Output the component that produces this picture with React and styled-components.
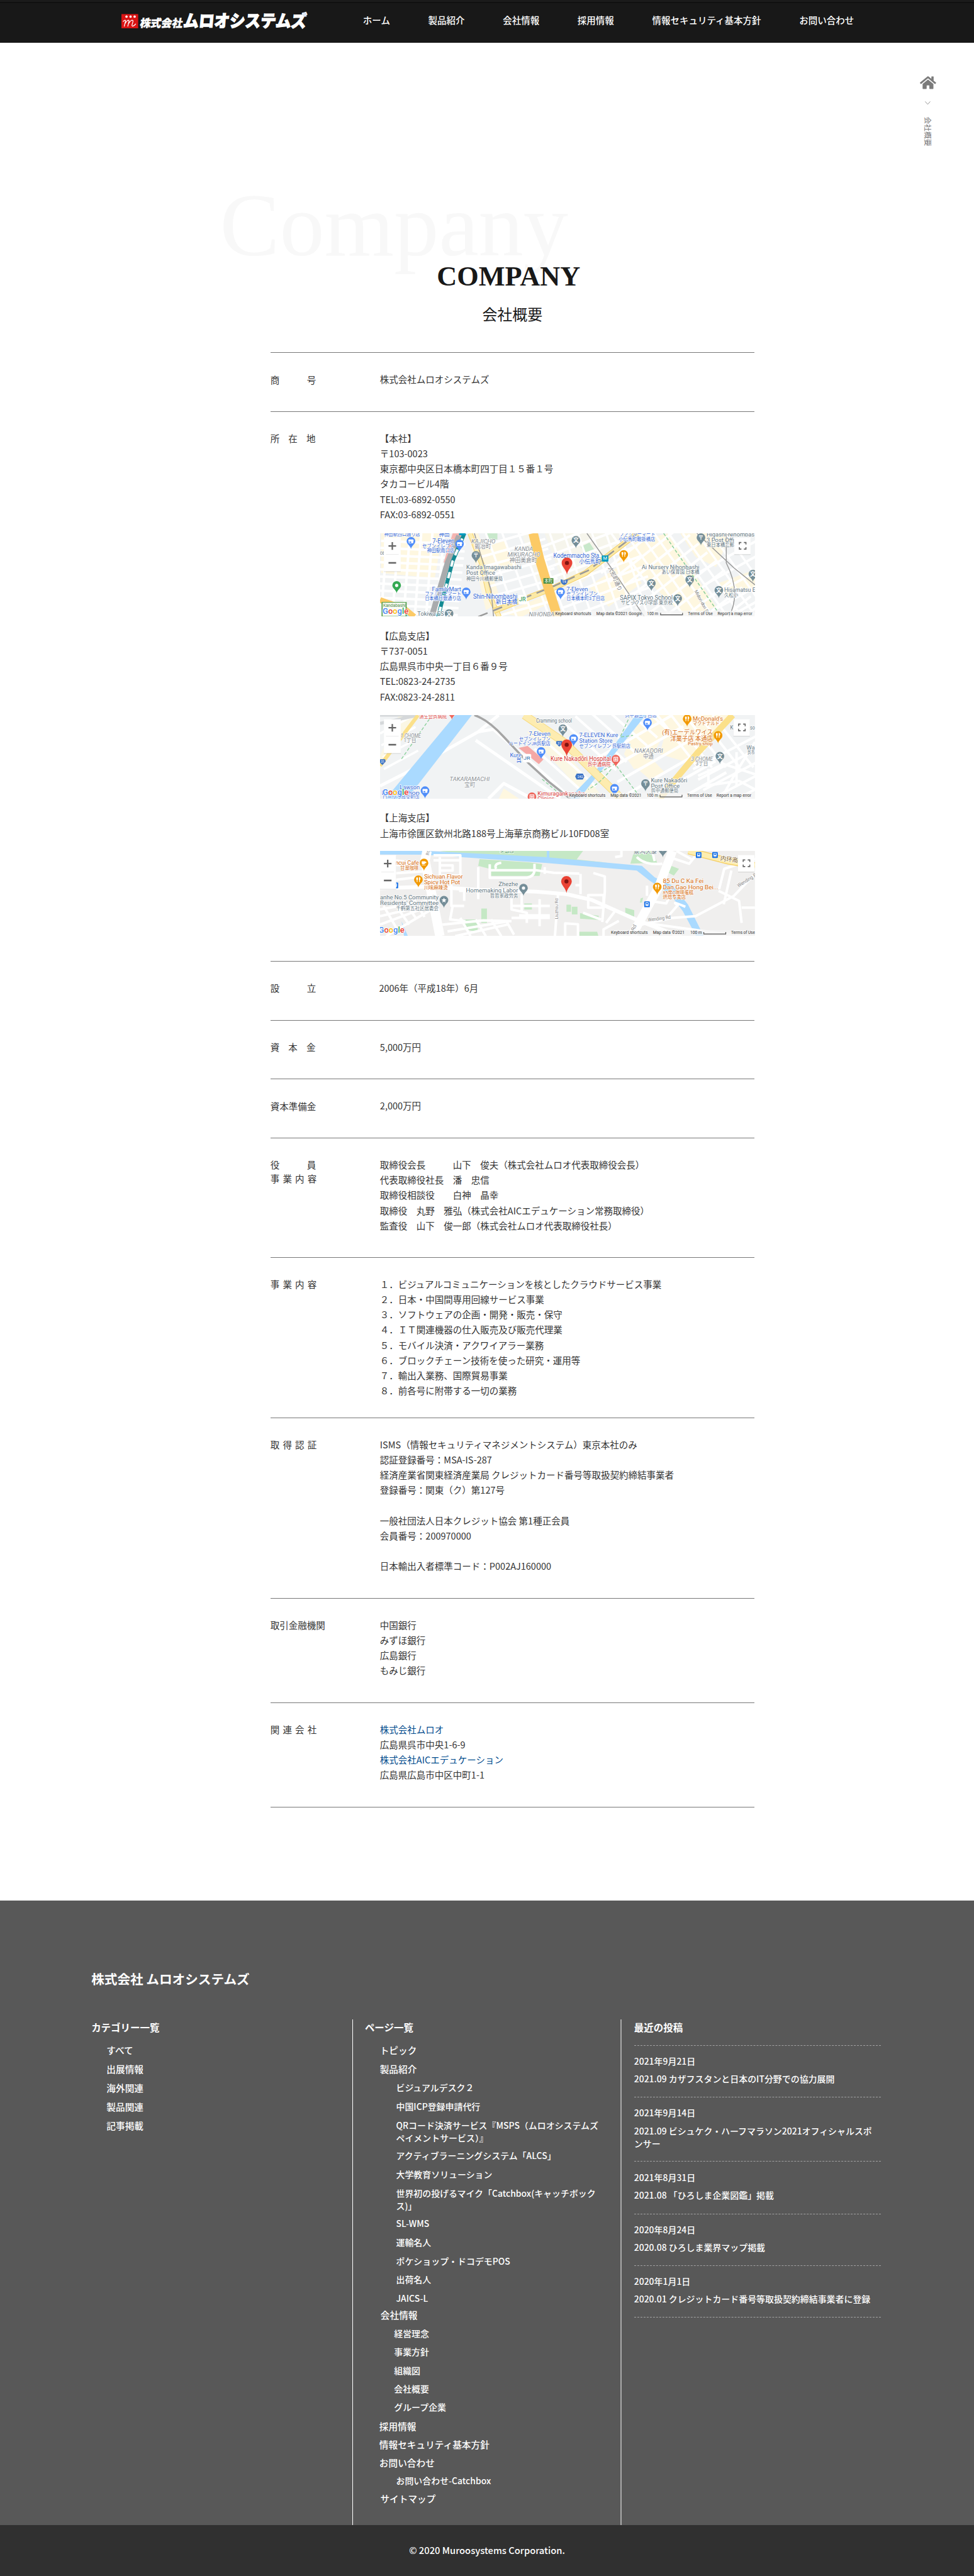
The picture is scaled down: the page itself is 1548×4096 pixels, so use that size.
import React from "react";
import styled, { createGlobalStyle, css } from "styled-components";
import { FaHome } from "react-icons/fa";

/* 1rem = 10 design pixels, the whole page is scaled through the root size */
const GlobalStyle = createGlobalStyle`
  html { font-size: 8.0625px; }
  body {
    margin: 0;
    background: #fff;
    color: #333;
    font-family: "Noto Sans CJK JP", "Noto Sans", sans-serif;
    font-size: 1.8rem;
    overflow-x: hidden;
  }
  *, *::before, *::after { box-sizing: border-box; }
  a { color: inherit; text-decoration: none; }
  ul { list-style: none; margin: 0; padding: 0; }
`;

const Page = styled.div`
  position: relative;
  width: 192rem;
  height: 508rem;
  overflow: hidden;
  display: flex;
  flex-direction: column;
`;

/* ---------- header ---------- */
const Header = styled.header`
  height: 8.4rem;
  flex: none;
  display: flex;
  align-items: flex-start;
  background: linear-gradient(#1b1b1b 0 0.4rem, #101010 0.4rem 0.6rem, #181818 0.6rem);
`;
const Logo = styled.svg`
  width: 36.6rem;
  height: 3.2rem;
  margin: 2.5rem 0 0 23.9rem;
  flex: none;
  overflow: visible;
`;
const Nav = styled.nav`
  display: flex;
  gap: 7.52rem;
  margin: 2.5rem 0 0 11.05rem;
  color: #fff;
  font-weight: 500;
  line-height: 3rem;
  white-space: nowrap;
`;

/* ---------- breadcrumb ---------- */
const Breadcrumb = styled.aside`
  position: absolute;
  top: 15rem;
  right: 7.5rem;
  width: 3.2rem;
  display: flex;
  flex-direction: column;
  align-items: center;
  color: #7b7b7b;
`;
const HomeIcon = styled(FaHome)`
  width: 3.2rem;
  height: 2.84rem;
  margin-top: -0.1rem;
`;
const Chevron = styled.svg`
  width: 1.1rem;
  height: 0.7rem;
  margin: 2.2rem 0 2.4rem;
`;
const CrumbSlot = styled.div`
  width: 1.5rem;
  height: 5.9rem;
  display: flex;
  align-items: center;
  justify-content: center;
`;
const CrumbText = styled.span`
  flex: none;
  transform: rotate(90deg);
  font-size: 1.46rem;
  line-height: 1.5rem;
  white-space: nowrap;
`;

/* ---------- company section ---------- */
const Main = styled.main`
  position: relative;
  width: 95.4rem;
  margin-left: 53.3rem;
  flex: 1 0 auto;
`;
const Watermark = styled.div`
  position: absolute;
  left: -9.95rem;
  top: 26.1rem;
  font: 17.65rem/20rem "Liberation Serif", serif;
  color: #f8f8f8;
  z-index: -1;
`;
const Title = styled.h1`
  margin: 42.6rem 0 0;
  padding-right: 1.5rem;
  text-align: center;
  font: bold 5.5rem/7rem "Liberation Serif", serif;
  color: #181818;
`;
const Subtitle = styled.h2`
  margin: 1.95rem 0 5.55rem;
  text-align: center;
  font-size: 2.97rem;
  font-weight: 400;
  line-height: 4rem;
  color: #181818;
`;
const Row = styled.section`
  height: ${(p) => p.$h}rem;
  display: grid;
  grid-template-columns: 21.6rem 1fr;
  align-items: start;
  border-top: 1px solid #777;
  &:last-child { border-bottom: 1px solid #777; }
`;
const Term = styled.div`
  padding-top: 3.88rem;
  line-height: 2.66rem;
  white-space: pre-line;
  word-spacing: 0.24rem;
  letter-spacing: ${(p) => p.$tight ? "-0.025rem" : 0};
`;
const Detail = styled.div`
  padding-top: 3.73rem;
  line-height: 3rem;
  white-space: pre-line;
  margin-left: ${(p) => p.$shift || 0}rem;
`;
const Link = styled.a`
  color: #004a8c;
`;
const Map = styled.svg`
  display: block;
  width: ${(p) => p.$w}rem;
  height: ${(p) => p.$h}rem;
  margin: ${(p) => p.$m}rem 0 2.3rem;
  font-family: Roboto, "Noto Sans CJK JP", sans-serif;
`;

/* ---------- footer ---------- */
const Footer = styled.footer`
  flex: none;
  height: 123.2rem;
  padding: 13.4rem 18rem 0;
  background: #585858;
  color: #fff;
  font-weight: 500;
  display: flex;
  flex-direction: column;
`;
const FooterTitle = styled.h3`
  margin: 0;
  font-size: 2.56rem;
  line-height: 4rem;
  font-weight: 700;
`;
const Columns = styled.div`
  flex: 1;
  margin-top: 6.1rem;
  display: grid;
  grid-template-columns: 51.4rem 52.85rem 1fr;
`;
const Column = styled.div`
  padding-left: ${(p) => p.$pad || 0}rem;
  ${(p) => p.$line && css`border-left: ${p.$line};`}
`;
const Heading = styled.h4`
  margin: 0;
  font-size: 1.92rem;
  line-height: 3rem;
  font-weight: 700;
`;
const List = styled.ul`
  padding-top: 1.8rem;
`;
const Item = styled.li`
  font-size: ${(p) => (p.$sub ? 1.73 : 1.82)}rem;
  line-height: 2.47rem;
  margin-top: ${(p) => p.$gap}rem;
  margin-left: ${(p) => p.$in}rem;
  white-space: pre;
`;
const Posts = styled.ul`
  width: 48.6rem;
  margin-top: 2rem;
  border-top: 1px dashed #a2a2a2;
`;
const Post = styled.li`
  height: ${(p) => p.$h}rem;
  padding-top: 1.92rem;
  border-bottom: 1px dashed #a2a2a2;
  font-size: 1.73rem;
  line-height: 2.46rem;
`;
const PostTitle = styled.div`
  margin-top: 1.05rem;
  white-space: pre-line;
`;
const Copyright = styled.div`
  flex: none;
  height: 10rem;
  background: #303030;
  color: #fff;
  font-weight: 500;
  font-size: 1.83rem;
  line-height: 10rem;
  text-align: center;
`;

/* ---------- map pieces: map units are 1.985 x 3 per design pixel ---------- */
const at = (x, y, rot) => `translate(${x} ${y}) scale(1.985 3)` + (rot ? ` rotate(${rot})` : "");

const Label = ({ x, y, len, size = 12, fill = "#5f7580", end, rot, italic, halo = true, children }) => (
  <text
    transform={at(x, y, rot)}
    fontSize={size}
    fill={fill}
    fontStyle={italic ? "italic" : undefined}
    textAnchor={end ? "end" : "start"}
    textLength={len ? len / 1.985 : undefined}
    lengthAdjust="spacingAndGlyphs"
    stroke={halo ? "#fff" : "none"}
    strokeWidth={halo ? 1.6 : 0}
    paintOrder="stroke"
  >
    {children}
  </text>
);

const glyphs = {
  shop: <path d="M-4.5-19h9l1 3.5h-1v4h-9v-4h-1zM-3-15v2.5h3.5v-2.5z" fill="#fff" fillRule="evenodd" />,
  food: <path d="M-3.5-20v3.5c0 1.5 2 1.5 2 0V-20M-2.5-20v9M2-11v-9c2 1 2 4 0 5" stroke="#fff" strokeWidth="1.4" fill="none" />,
  cup: <path d="M-4.5-19h7v1h2v3h-2.500q0 2-2 2h-2.500q-2 0-2-2zM-4.500-12h8v1h-8z" fill="#fff" />,
  dot: <circle cy="-15.500" r="3.200" fill="#fff" />,
  cross: <path d="M-4.500-20h9v9h-9zM-3-18.500v6h6v-6zM-.8-18h1.600v1.700h1.700v1.600h-1.700v1.700h-1.600v-1.700h-1.700v-1.600h1.700z" fill="#fff" fillRule="evenodd" />,
  star: <path d="M0-20.500l1.400 3.300 3.600.3-2.700 2.300.8 3.600-3.100-1.900-3.100 1.900.8-3.600-2.700-2.300 3.600-.3z" fill="#fff" />,
};
const Pin = ({ x, y, fill = "#758e98", icon }) => (
  <g transform={at(x, y)}>
    <path d="M0 0C-1-7-8.500-9-8.500-15.500A8.500 8.500 0 1 1 8.500-15.500C8.500-9 1-7 0 0Z" fill={fill} />
    {glyphs[icon] || <text y="-11.500" fontSize="11" fontWeight="700" fill="#fff" textAnchor="middle">{icon}</text>}
  </g>
);
const Marker = ({ x, y }) => (
  <g transform={at(x, y)}>
    <path d="M0 0C-1.500-10-10.500-15-10.500-23A10.500 10.500 0 1 1 10.500-23C10.500-15 1.500-10 0 0Z" fill="#ea4335" />
    <circle cy="-22.800" r="4" fill="#811411" />
  </g>
);
const Road = ({ d, w = 4, c = "#fff", dash }) => (
  <path d={d} fill="none" stroke={c} strokeWidth={w} strokeDasharray={dash} vectorEffect="non-scaling-stroke" strokeLinejoin="round" />
);
/* n parallel segments, each shifted by (dx, dy) */
const hatch = (x1, y1, x2, y2, dx, dy, n) =>
  Array.from({ length: n }, (_, i) => `M${x1 + dx * i} ${y1 + dy * i}L${x2 + dx * i} ${y2 + dy * i}`).join("");

const Google = ({ x, y }) => (
  <text transform={at(x, y)} fontSize="16.500" fontWeight="500" textLength="51" lengthAdjust="spacingAndGlyphs" stroke="#fff" strokeWidth="2" paintOrder="stroke">
    <tspan fill="#4285f4">G</tspan><tspan fill="#ea4335">o</tspan><tspan fill="#fbbc05">o</tspan>
    <tspan fill="#4285f4">g</tspan><tspan fill="#34a853">l</tspan><tspan fill="#ea4335">e</tspan>
  </text>
);
const Controls = ({ x, y, fx, fy, w = 66 }) => (
  <g>
    <rect x={x} y={y + 4} width={w} height="200" fill="#000" opacity=".12" />
    <rect x={x} y={y} width={w} height="200" fill="#fff" />
    <path d={`M${x + 8} ${y + 100}h50`} stroke="#e6e6e6" strokeWidth="3" />
    <g transform={at(x + w - 33, y + 50)} stroke="#666" strokeWidth="2.800"><path d="M-7.500 0h15M0-7.500v15" /></g>
    <g transform={at(x + w - 33, y + 150)} stroke="#666" strokeWidth="3.200"><path d="M-7.500 0h15" /></g>
    <rect x={fx} y={fy + 4} width="64" height="98" fill="#000" opacity=".12" />
    <rect x={fx} y={fy} width="64" height="98" fill="#fff" />
    <g transform={at(fx + 33, fy + 48)} stroke="#666" strokeWidth="2" fill="none">
      <path d="M-6.500-2.500V-6.500H-2.500M2.500-6.500H6.500V-2.500M6.500 2.500V6.500H2.500M-2.500 6.500H-6.500V2.500" />
    </g>
  </g>
);
const Credits = ({ y, parts, barX, from, to }) => (
  <g>
    <rect x={from} y={y - 20} width={to - from} height="34" fill="#f5f5f5" opacity=".75" />
    {parts.map(([x, len, t]) => (
      <Label key={t} x={x} y={y + 5} len={len} size={8.8} fill="#333" halo={false}>{t}</Label>
    ))}
    <Road d={`M${barX} ${y - 8}v12h86v-12`} c="#555" w={1.2} />
  </g>
);

const BLUE = "#3367d6";
const PINB = "#4f8df9";
const GREY = "#8a8f94";
const ORANGE = "#d66b0b";

const TokyoMap = () => (
  <Map viewBox="56 65 1466 494" preserveAspectRatio="none" $w={73.9} $h={16.45} $m={2.2}>
    <rect x="56" y="65" width="1466" height="494" fill="#f1f3f4" />
    <g fill="#fef7e0">
      <path d="M60 65H300L270 330 60 300Z" />
      <path d="M400 65H440L530 470 470 520Z" />
      <path d="M440 160L540 110 590 250 480 300Z" />
      <path d="M610 65h30l60 260-30 30zM700 65l80 330 70-40 190-250V65Z" opacity=".4" />
      <path d="M1050 120L1180 65 1370 500 1250 559 1090 330 960 250Z" />
      <path d="M1230 65h200l-60 200-80-60zM1380 360l142-80v100l-110 60z" />
      <path d="M870 380l150-150 60 130-130 140z" />
      <path d="M530 540l210-130 20 40-150 109z" />
    </g>
    <path d="M470 65h45v36h-30zM840 145l35-25 20 45-35 25z" fill="#c8e8cb" />
    <Road d={hatch(60, 110, 390, 130, -3, 42, 11)} w={4} />
    <Road d={hatch(85, 65, 60, 559, 44, 0, 6)} w={4} />
    <Road d={hatch(430, 150, 690, 40, 12, 58, 8)} w={4} />
    <Road d={hatch(470, 65, 590, 559, 62, -8, 4)} w={3.500} />
    <Road d={hatch(680, 150, 1020, -40, 14, 60, 9)} w={4} />
    <Road d={hatch(720, 65, 830, 559, 55, 0, 6)} w={3.500} />
    <Road d={hatch(920, 300, 1200, -30, 34, 52, 12)} w={4} />
    <Road d={hatch(960, 65, 1190, 559, 56, 0, 9)} w={3.500} />
    <Road d={hatch(1300, 300, 1540, 100, 24, 70, 5)} w={4} />
    <path d="M340 65h45l-50 210-30-40z" fill="#f5b5b1" />
    <Road d="M365 80L320 240 258 559" c="#a9abad" w={9} />
    <Road d="M386 65L340 230 283 559" c="#128a93" w={6} />
    <Road d="M386 65L340 230 283 559" c="#fff" w={4} />
    <Road d="M386 65L340 230 283 559" c="#128a93" w={5} dash="9 10" />
    <Road d="M408 65L455 250 480 420 522 559" c="#f5d16b" w={8} />
    <Road d="M408 65L455 250 480 420 522 559" c="#fdeeb5" w={6} />
    <Road d="M425 65L490 400 500 559" c="#999" w={1.500} />
    <Road d="M500 525L740 385 860 300 1062 65" c="#f5d16b" w={9} />
    <Road d="M500 525L740 385 860 300 1062 65" c="#fbe9a6" w={7} />
    <Road d="M440 559L740 375 870 285 1062 65" c="#999" w={2.500} dash="16 9" />
    <Road d="M655 65L680 220 708 360 750 559" c="#fcca66" w={15} />
    <path d="M60 510l60 49h60l-40-49z" fill="#a8d8f5" />
    <Road d="M56 460L150 510 190 559" c="#fcca66" w={9} />
    <Road d="M865 65L960 270 1090 559M1295 65L1440 270 1522 370M1420 559Q1470 420 1410 240L1410 65" c="#999" w={1.500} />
    <Road d="M1165 65L1390 559" c="#8bcf9b" w={1.500} dash="5 3" />
    <Label x={72} y={79} len={140} fill={BLUE} size={10.500}>神田駅西口通り店</Label>
    <Label x={286} y={82} len={42} fill={BLUE} size={13}>神田</Label>
    <Label x={347} y={124} len={86} fill={BLUE} end size={13}>7-Eleven</Label>
    <Label x={347} y={151} len={126} fill={BLUE} end size={10}>セブンイレブン</Label>
    <Label x={347} y={177} len={108} fill={BLUE} end size={10}>神田駅南口店</Label>
    <Label x={413} y={125} len={94} fill={GREY} italic>KAJICHO</Label>
    <Label x={426} y={156} len={64} fill={GREY}>鍛冶町</Label>
    <Label x={582} y={171} len={72} fill={GREY} italic>KANDA</Label>
    <Label x={554} y={204} len={128} fill={GREY} italic>MIKURACHO</Label>
    <Label x={562} y={236} len={108} fill={GREY}>神田美倉町</Label>
    <Label x={393} y={279} len={216}>Kanda Imagawabashi</Label>
    <Label x={393} y={312} len={113}>Post Office</Label>
    <Label x={393} y={343} len={143} size={10}>神田今川橋郵便局</Label>
    <Label x={373} y={406} len={114} fill={BLUE} end>FamilyMart</Label>
    <Label x={373} y={434} len={142} fill={BLUE} end size={10}>ファミリーマート</Label>
    <Label x={373} y={461} len={142} fill={BLUE} end size={10}>日本橋日銀通り店</Label>
    <Label x={593} y={451} len={173} fill={BLUE} end size={13}>Shin-Nihombashi</Label>
    <Label x={593} y={482} len={84} fill={BLUE} end size={12}>新日本橋</Label>
    <rect x="597" y="430" width="33" height="55" fill="#fff" rx="5" />
    <Label x={600} y={468} len={26} fill="#0d8a3e" size={11}>JR</Label>
    <Label x={202} y={552} len={104}>Tokiwa ES</Label>
    <Label x={638} y={556} len={100} fill={GREY} italic>NIHONBA</Label>
    <Label x={919} y={210} len={185} fill={BLUE} end size={12.500}>Kodemmacho Sta.</Label>
    <Label x={919} y={243} len={84} fill={BLUE} end size={12}>小伝馬町</Label>
    <Label x={1132} y={80} len={140} fill={BLUE} end size={10}>ファミリーマート</Label>
    <Label x={1132} y={108} len={143} fill={BLUE} end size={10}>小伝馬町鞍掛橋店</Label>
    <Label x={785} y={408} len={84} fill={BLUE}>7-Eleven</Label>
    <Label x={785} y={433} len={122} fill={BLUE} size={10}>セブンイレブン</Label>
    <Label x={785} y={461} len={150} fill={BLUE} size={10}>日本橋本町3丁目店</Label>
    <Label x={1305} y={277} len={226} end>Ai Nursery Nihonbashi</Label>
    <Label x={1305} y={305} len={148} end size={10}>あい保育園 日本橋</Label>
    <Label x={1200} y={461} len={206} end size={12.500}>SAPIX Tokyo School</Label>
    <Label x={1200} y={487} len={202} end size={10}>サピックス小学部 東京校</Label>
    <Label x={1333} y={83} len={187}>Higashi-Nihombas</Label>
    <Label x={1333} y={117} len={108}>3 Post Offi</Label>
    <Label x={1333} y={145} len={108} size={10}>東日本橋三郵</Label>
    <Label x={1402} y={413} len={122}>Hisamatsu E</Label>
    <Label x={1402} y={441} len={54} size={10}>久松小</Label>
    <Label x={948} y={270} len={100} rot={66} fill="#777" size={11}>人形町通り</Label>
    <Label x={1285} y={408} len={100} rot={62} fill="#777" size={9}>Midori-dori St</Label>
    <Label x={56} y={193} len={16}>ce</Label>
    <rect x="695" y="331" width="39" height="32" fill="#428a3e" />
    <Label x={699} y={356} len={32} fill="#fff" size={8.500} halo={false}>本町</Label>
    <path d="M763 337l13 6 13-6q4 28-13 34-17-8-13-34z" fill="#3d74c6" />
    <Label x={768} y={361} len={16} fill="#fff" size={7} halo={false}>14</Label>
    <rect x="923" y="196" width="26" height="37" rx="3" fill="#009bc0" />
    <Label x={928} y={223} len={16} fill="#fff" size={8} halo={false}>M</Label>
    <rect x="365" y="55" width="25" height="22" fill="#009bc0" />
    <Pin x={177} y={158} fill={PINB} icon="shop" />
    <Pin x={367} y={174} fill={PINB} icon="shop" />
    <Pin x={393} y={458} fill={PINB} icon="shop" />
    <Pin x={762} y={458} fill={PINB} icon="shop" />
    <Pin x={431} y={242} icon="〒" />
    <Pin x={822} y={153} icon="文" />
    <Pin x={1311} y={137} icon="〒" />
    <Pin x={1117} y={408} icon="文" />
    <Pin x={1267} y={386} icon="文" />
    <Pin x={1381} y={449} icon="文" />
    <Pin x={1220} y={497} icon="文" />
    <Pin x={1514} y={353} icon="文" />
    <Pin x={326} y={587} icon="文" />
    <Pin x={1009} y={237} fill="#f29900" icon="food" />
    <Pin x={121} y={420} fill="#34a853" icon="dot" />
    <Marker x={787} y={309} />
    <rect x="64" y="474" width="94" height="83" fill="#f8faf5" stroke="#4c9a45" strokeWidth="4" />
    <Label x={68} y={500} len={88} fill="#4c8a45" size={8.500} halo={false}>Kandabashi</Label>
    <Google x={66} y={540} />
    <Controls x={71} y={90} fx={1441} fy={91} />
    <Credits y={544} from={737} to={1522} barX={1153} parts={[[741, 141, "Keyboard shortcuts"], [902, 178, "Map data ©2021 Google"], [1100, 44, "100 m"], [1260, 97, "Terms of Use"], [1376, 136, "Report a map error"]]} />
  </Map>
);

const KureMap = () => (
  <Map viewBox="56 541 1466 494" preserveAspectRatio="none" $w={73.9} $h={16.5} $m={2.1}>
    <rect x="56" y="541" width="1466" height="494" fill="#f1f3f4" />
    <g fill="#fef7e0">
      <path d="M130 541h70l-144 320v-80zM630 640l70-30 230 420-60 5z" opacity=".8" />
      <path d="M1060 600l90-59h50l-90 280-60 40-40-90zM1190 541l240 0-150 290-130-60z" />
      <path d="M1040 830l60-60 70 110-60 40zM520 1035l20-60 60 60z" />
    </g>
    <Road d={hatch(660, 740, 860, 1010, 40, -48, 9)} w={4} />
    <Road d={hatch(900, 800, 1200, 540, 42, 68, 6)} w={4.500} />
    <Road d={hatch(1140, 541, 1300, 850, 54, 0, 5)} w={4} />
    <Road d={hatch(1280, 860, 1560, 640, 20, 62, 6)} w={4} />
    <Road d={hatch(56, 650, 190, 541, 5, 70, 4)} w={3.500} />
    <Road d="M56 960L160 880 440 640 520 541M440 640l60-15 240 320 60 90M480 1035l60-90 110 90M430 690l330 345" w={5} />
    <Road d="M1522 700L1440 900 1390 1035M1300 900l100-70 122 60M1320 960l140-30 62 50M1340 860v80M1450 760v200" w={4} />
    <path d="M350 541h65L190 980 155 1035H78Z" fill="#aadaff" />
    <path d="M1055 541h40L1020 680 890 930 835 1035H795L900 870 1000 660Z" fill="#aadaff" />
    <Road d="M56 541h80l60 5M56 590l150-49" c="#d5d8da" w={5} />
    <Road d="M205 541L56 840" c="#fbe08a" w={6} />
    <Road d="M620 541L775 700 1000 1035" c="#f8dc83" w={13} />
    <Road d="M620 541L775 700 1000 1035" c="#fdecb0" w={11} />
    <Road d="M1435 541L1300 760 1200 940 1150 1035" c="#fbe08a" w={10} />
    <path d="M598 735l35-12 62 80-18 28z" fill="#f5a8a5" />
    <Road d="M425 541Q480 570 540 670L640 830 720 940 800 1035" c="#a5a5a5" w={3.500} />
    <Road d="M1035 541l-40 130 50-10M915 880l60-50 100 200M960 860q-40 80-90 120M260 541L140 800M690 920l80 100" c="#86cf97" w={1.300} dash="5 3" />
    <Label x={317} y={560} len={108} end fill="#d93a36" size={10.500}>済生会呉病院</Label>
    <Label x={136} y={673} len={80} fill={GREY} italic>1 CHOME</Label>
    <Label x={148} y={700} len={50} fill={GREY} size={10.500}>1丁目</Label>
    <Label x={328} y={932} len={157} fill={GREY} italic>TAKARAMACHI</Label>
    <Label x={386} y={965} len={42} fill={GREY} size={11}>宝町</Label>
    <Label x={211} y={978} len={78} fill={BLUE} end>Lawson</Label>
    <Label x={211} y={1011} len={148} fill={BLUE} end>karasu Shop</Label>
    <Label x={211} y={1037} len={145} fill={BLUE} end size={10}>ローソン呉宝町店</Label>
    <Label x={666} y={586} len={140} size={11}>Cramming school</Label>
    <Label x={722} y={665} len={84} fill={BLUE} end>7-Eleven</Label>
    <Label x={722} y={694} len={122} fill={BLUE} end size={10}>セブンイレブン</Label>
    <Label x={722} y={720} len={163} fill={BLUE} end size={10}>ハートインJR呉駅店</Label>
    <Label x={609} y={789} len={45} fill={BLUE} end>Kure</Label>
    <Label x={609} y={821} len={20} fill={BLUE} end>呉</Label>
    <Label x={835} y={672} len={152} fill={BLUE}>7-ELEVEN Kure</Label>
    <Label x={835} y={706} len={130} fill={BLUE}>Station Store</Label>
    <Label x={835} y={735} len={200} fill={BLUE} size={10}>セブンイレブン 呉駅前店</Label>
    <Label x={723} y={813} len={236} fill="#d93a36" size={12.500}>Kure Nakadōri Hospital</Label>
    <Label x={958} y={841} len={90} fill="#d93a36" end size={10.500}>呉中通病院</Label>
    <Label x={672} y={1015} len={186} fill="#d93a36">Kimuragankanaika</Label>
    <Label x={672} y={1045} len={66} fill="#d93a36">Clinics</Label>
    <Label x={1138} y={553} len={124} fill={BLUE} end size={10}>呉中通三丁目店</Label>
    <Label x={1279} y={573} len={118} fill={ORANGE}>McDonald's</Label>
    <Label x={1279} y={602} len={105} fill={ORANGE} size={10}>マクドナルド</Label>
    <Label x={1357} y={656} len={198} fill={ORANGE} end>(有)エーデルワイス</Label>
    <Label x={1357} y={692} len={166} fill={ORANGE} end>洋菓子店 本通店</Label>
    <Label x={1357} y={718} len={97} fill={ORANGE} end size={10}>Pastry shop</Label>
    <Label x={1050} y={765} len={112} fill={GREY} italic>NAKADORI</Label>
    <Label x={1085} y={799} len={41} fill={GREY}>中通</Label>
    <Label x={1272} y={811} len={86} fill={GREY} italic>3 CHOME</Label>
    <Label x={1290} y={838} len={49} fill={GREY} size={10.500}>3丁目</Label>
    <Label x={1115} y={939} len={142}>Kure Nakadōri</Label>
    <Label x={1115} y={973} len={113}>Post Office</Label>
    <Label x={1115} y={999} len={107} size={10}>呉中通郵便局</Label>
    <Label x={1425} y={625} len={12}>K</Label>
    <Label x={1503} y={625} len={19}>so</Label>
    <Label x={1489} y={744} len={32}>Wa</Label>
    <Label x={1493} y={773} len={28} size={10}>呉市</Label>
    <rect x="615" y="770" width="32" height="50" fill="#fff" rx="6" />
    <Label x={617} y={805} len={26} fill="#1c67a8" size={10}>JR</Label>
    <path d="M746 694h22l2 14-13 20-13-20zM56 802h20l2 14-13 20-9-14zM825 886h24l6 18-6 18h-24l-6-18z" fill="#3d74c6" />
    <Label x={828} y={912} len={22} fill="#fff" size={7.500} halo={false}>242</Label>
    <Label x={750} y={716} len={14} fill="#fff" size={7.500} halo={false}>31</Label>
    <Label x={59} y={824} len={14} fill="#fff" size={7.500} halo={false}>31</Label>
    <Pin x={337} y={568} fill="#ee675c" icon="cross" />
    <Pin x={771} y={669} icon="文" />
    <Pin x={813} y={726} fill={PINB} icon="shop" />
    <Pin x={686} y={802} fill={PINB} icon="shop" />
    <Pin x={978} y={848} fill="#ee675c" icon="cross" />
    <Pin x={650} y={1070} fill="#ee675c" icon="cross" />
    <Pin x={232} y={1034} fill={PINB} icon="shop" />
    <Pin x={973} y={1020} fill={PINB} icon="shop" />
    <Pin x={1102} y={632} fill={PINB} icon="shop" />
    <Pin x={1257} y={610} fill="#f29900" icon="food" />
    <Pin x={1378} y={708} fill="#f29900" icon="food" />
    <Pin x={1385} y={830} icon="文" />
    <Pin x={1094} y={992} icon="〒" />
    <Marker x={786} y={785} />
    <Google x={66} y={1013} />
    <Controls x={71} y={566} fx={1438} fy={566} />
    <Credits y={1020} from={792} to={1522} barX={1151} parts={[[796, 141, "Keyboard shortcuts"], [957, 121, "Map data ©2021"], [1099, 44, "100 m"], [1257, 97, "Terms of Use"], [1372, 136, "Report a map error"]]} />
  </Map>
);

const ShanghaiMap = () => (
  <Map viewBox="56 264 1466 504" preserveAspectRatio="none" $w={73.9} $h={16.8} $m={2}>
    <rect x="56" y="264" width="1466" height="504" fill="#f0efee" />
    <g fill="#c5e8c5">
      <path d="M290 264h560l-25 50 120 20-200-10-360-35zM445 312l195 20 50 10-10 70H490v-40l-50-20z" />
      <path d="M1050 264l70 0 20 70-105 5zM1190 350l35 20-20 40-25-20zM383 670h55v75l-55-20zM620 575h30v36h-30zM785 582h18v42h-18zM806 594h22v46h-22zM838 632l73 15v25l-73-7zM1015 600l35 15v38l-35-15zM835 742h70l5 26h-75zM1075 545l10-5-5 30h-8z" />
    </g>
    <Road d="M463 605V690" c="#c5e8c5" w={9} />
    <path d="M56 264H240L700 300 1080 352 1130 420 1200 470 1260 580 1322 768H1292L1240 620 1190 520 1110 440 1060 380 700 335 230 286 56 285Z" fill="#aadaff" />
    <path d="M708 264h10v50h-10zM140 680l25 88h-15z" fill="#aadaff" />
    <Road d="M240 264L232 320 290 768" w={15} />
    <Road d="M1200 264L1145 480 1040 768" w={14} />
    <Road d="M56 485l190-10 200 20 220 10 120 15 100 35 170 115 120 70 60 33" w={6} />
    <Road d="M752 520L740 768M485 378h180l70 15 100 5M660 340v35q0 40-30 48H485v-80M840 400v120M870 520V600h60v-75h-60M610 520v100M570 530v80l60 20v60M680 550v160M570 590h150M600 645h120M570 660h150M890 395l45 20v90l-10 180M850 630l70 40M780 768v-75l50 5v70M1080 700l120-40 90-10 150-120 82-130M1090 690l432 90M940 690l40-80M1110 560l65 15 20-60M1380 500l80 60 10 130M1100 470v60M700 360v40M510 370q-10-30 20-35M820 467h25" w={4} />
    <Road d="M265 290h105v120h-80v-110M265 320h105M290 350h50v30h-50M365 500h90M385 500v60M335 430v160h50M340 590l-10 80 60 10M440 360v190M56 610l190-50M56 650l200-70M56 700l150-85M80 768l180-160M70 590l50 130M110 570l60 130M150 560l50 110M190 555l40 100" w={4} />
    <Road d="M300 700l160-25 110 5M320 740l240-60M350 768l210-70M370 660l40 108M430 670l40 98M490 670l40 98M550 680l30 80M56 310l170 30M56 350l120-5M80 400l150-15M90 440l110-20M975 300l25-5v-31M1060 300q30 50 100 40M1120 264l10 60" w={4} />
    <Road d="M1195 305l70 35 40-76M1215 264l60 50M1522 310l-120 60-20 120M1430 380l-30 200M1180 655l40-70q-30-30 30 10M930 768v-40l60-50M1470 600h52" w={4} />
    <Road d="M1262 264L1420 325 1522 352" c="#f5d16b" w={11} />
    <Road d="M1262 264L1420 325 1522 352" c="#fdeeb0" w={8} />
    <Label x={525} y={273} len={54} fill="#3f8f56" size={10}>梦公园</Label>
    <Label x={208} y={347} len={92} fill={ORANGE} end>ncui Cafe</Label>
    <Label x={207} y={375} len={72} fill={ORANGE} end size={10}>甘翠咖啡</Label>
    <Label x={228} y={427} len={152} fill={ORANGE}>Sichuan Flavor</Label>
    <Label x={228} y={462} len={141} fill={ORANGE}>Spicy Hot Pot</Label>
    <Label x={228} y={492} len={93} fill={ORANGE} size={10}>川味麻辣烫</Label>
    <Label x={285} y={549} len={229} end>anhe No.5 Community</Label>
    <Label x={285} y={584} len={229} end>Residents' Committee</Label>
    <Label x={285} y={613} len={166} end size={10}>千鹤第五社区居委会</Label>
    <Label x={596} y={474} len={77} end>Zhezhe</Label>
    <Label x={596} y={510} len={204} end>Homemaking Labor</Label>
    <Label x={596} y={539} len={110} end size={10}>哲哲家政劳务</Label>
    <Label x={1140} y={279} len={93} end size={11}>景鸿大厦</Label>
    <Label x={1162} y={455} len={159} fill={ORANGE}>85 Du C Ka Fei</Label>
    <Label x={1162} y={491} len={217} fill={ORANGE}>Dan Gao Hong Bei...</Label>
    <Label x={1162} y={519} len={120} fill={ORANGE} size={10}>85度C咖啡蛋糕</Label>
    <Label x={1162} y={547} len={90} fill={ORANGE} size={10}>烘焙专卖店</Label>
    <Label x={1386} y={320} len={70} fill="#7a5a1e" rot={7} size={12}>内环高</Label>
    <Label x={753} y={668} len={82} fill="#888" rot={-90} size={9.500}>Liuzhou Rd</Label>
    <Label x={1104} y={682} len={90} fill="#888" rot={-7} size={10}>Wending Rd</Label>
    <Label x={1458} y={480} len={84} fill="#888" rot={-32} size={10}>Wending R</Label>
    <Label x={1050} y={738} len={24} fill="#888" rot={-68} size={10}>Rd</Label>
    <Label x={248} y={290} len={20} fill="#888" rot={-85} size={9}>Rd</Label>
    {[[1302, 288], [1366, 288], [1100, 580], [116, 468]].map(([x, y]) => (
      <g key={x} transform={at(x, y)}>
        <rect x="-5.500" y="-5.800" width="11" height="11.600" rx="1.500" fill="#1a73e8" />
        <path d="M-3-3.500h6v6h-1v1h-1v-1h-2v1h-1v-1h-1zM-2-2.300v2.300h4v-2.300z" fill="#fff" fillRule="evenodd" />
      </g>
    ))}
    <Pin x={228} y={382} fill="#f29900" icon="cup" />
    <Pin x={206} y={481} fill="#f29900" icon="food" />
    <Pin x={306} y={602} icon="star" />
    <Pin x={617} y={530} icon="dot" />
    <Pin x={1162} y={302} icon="dot" />
    <Pin x={1140} y={524} fill="#f29900" icon="food" />
    <Marker x={785} y={513} />
    <Google x={50} y={747} />
    <Controls x={53} y={289} fx={1456} fy={289} />
    <Credits y={752} from={956} to={1522} barX={1322} parts={[[959, 144, "Keyboard shortcuts"], [1123, 124, "Map data ©2021"], [1269, 46, "100 m"], [1429, 93, "Terms of Use"]]} />
  </Map>
);

/* ---------- data ---------- */
const navItems = ["ホーム", "製品紹介", "会社情報", "採用情報", "情報セキュリティ基本方針", "お問い合わせ"];

const rows = [
  { h: 11.6, term: "商　　　号", body: "株式会社ムロオシステムズ" },
  {
    h: 108.4, term: "所　在　地", tight: true,
    body: (
      <>
        {"【本社】\n〒103-0023\n東京都中央区日本橋本町四丁目１５番１号\nタカコービル4階\nTEL:03-6892-0550\nFAX:03-6892-0551"}
        <TokyoMap />
        {"【広島支店】\n〒737-0051\n広島県呉市中央一丁目６番９号\nTEL:0823-24-2735\nFAX:0823-24-2811"}
        <KureMap />
        {"【上海支店】\n上海市徐匯区欽州北路188号上海華京商務ビル10FD08室"}
        <ShanghaiMap />
      </>
    ),
  },
  { h: 11.63, term: "設　　　立", body: "2006年（平成18年）6月", shift: -0.18 },
  { h: 11.62, term: "資　本　金", tight: true, body: "5,000万円" },
  { h: 11.62, term: "資本準備金", body: "2,000万円" },
  {
    h: 23.55, term: "役　　　員\n事 業 内 容",
    body: "取締役会長　　　山下　俊夫（株式会社ムロオ代表取締役会長）\n代表取締役社長　潘　忠信\n取締役相談役　　白神　晶幸\n取締役　丸野　雅弘（株式会社AICエデュケーション常務取締役）\n監査役　山下　俊一郎（株式会社ムロオ代表取締役社長）",
  },
  {
    h: 31.61, term: "事 業 内 容",
    body: "１．ビジュアルコミュニケーションを核としたクラウドサービス事業\n２．日本・中国間専用回線サービス事業\n３．ソフトウェアの企画・開発・販売・保守\n４．ＩＴ関連機器の仕入販売及び販売代理業\n５．モバイル決済・アクワイアラー業務\n６．ブロックチェーン技術を使った研究・運用等\n７．輸出入業務、国際貿易事業\n８．前各号に附帯する一切の業務",
  },
  {
    h: 35.62, term: "取 得 認 証",
    body: "ISMS（情報セキュリティマネジメントシステム）東京本社のみ\n認証登録番号：MSA-IS-287\n経済産業省関東経済産業局 クレジットカード番号等取扱契約締結事業者\n登録番号：関東（ク）第127号\n\n一般社団法人日本クレジット協会 第1種正会員\n会員番号：200970000\n\n日本輸出入者標準コード：P002AJ160000",
  },
  { h: 20.58, term: "取引金融機関", body: "中国銀行\nみずほ銀行\n広島銀行\nもみじ銀行" },
  {
    h: 20.7, term: "関 連 会 社",
    body: (
      <>
        <Link href="#">株式会社ムロオ</Link>{"\n広島県呉市中央1-6-9\n"}
        <Link href="#">株式会社AICエデュケーション</Link>{"\n広島県広島市中区中町1-1"}
      </>
    ),
  },
];

const categories = ["すべて", "出展情報", "海外関連", "製品関連", "記事掲載"];

/* [label, space above, indent, is sub item] */
const pages = [
  ["トピック", 0, 2.95],
  ["製品紹介", 1.24, 2.95],
  ["ビジュアルデスク２", 1.24, 6.15, true],
  ["中国ICP登録申請代行", 1.24, 6.15, true],
  ["QRコード決済サービス『MSPS（ムロオシステムズ\nペイメントサービス）』", 1.24, 6.15, true],
  ["アクティブラーニングシステム「ALCS」", 1.04, 6.15, true],
  ["大学教育ソリューション", 1.24, 6.15, true],
  ["世界初の投げるマイク「Catchbox(キャッチボック\nス)」", 1.24, 6.15, true],
  ["SL-WMS", 1.02, 6.15, true],
  ["運輸名人", 1.24, 6.15, true],
  ["ポケショップ・ドコデモPOS", 1.24, 6.15, true],
  ["出荷名人", 1.24, 6.15, true],
  ["JAICS-L", 1.22, 6.15, true],
  ["会社情報", 0.74, 3.1],
  ["経営理念", 1.27, 5.75, true],
  ["事業方針", 1.16, 5.75, true],
  ["組織図", 1.14, 5.75, true],
  ["会社概要", 1.22, 5.75, true],
  ["グループ企業", 1.03, 5.75, true],
  ["採用情報", 1.26, 2.85],
  ["情報セキュリティ基本方針", 1.15, 2.85],
  ["お問い合わせ", 1.11, 2.85],
  ["お問い合わせ-Catchbox", 1.14, 6.15, true],
  ["サイトマップ", 1.03, 3.05],
];

const posts = [
  [10.22, "2021年9月21日", "2021.09 カザフスタンと日本のIT分野での協力展開"],
  [12.69, "2021年9月14日", "2021.09 ビシュケク・ハーフマラソン2021オフィシャルスポ\nンサー"],
  [10.32, "2021年8月31日", "2021.08 「ひろしま企業図鑑」掲載"],
  [10.2, "2020年8月24日", "2020.08 ひろしま業界マップ掲載"],
  [10.2, "2020年1月1日", "2020.01 クレジットカード番号等取扱契約締結事業者に登録"],
];

const BrandLogo = () => (
  <Logo viewBox="0 0 366 32" aria-label="株式会社ムロオシステムズ">
    <rect y="3" width="33" height="28" fill="#d91414" />
    <path
      d="M3.500 17.500q2.500-3 4-2.500 1 .5.300 3L5.500 27M7 22q4-7 7-7 1.500.500.700 3L12.500 27M14 22q4-7 7.500-7 2 .5 1 3.500l-1.700 6q-.3 3 2.200 2 3-1 5-4"
      fill="none" stroke="#fff" strokeWidth="1.500" strokeLinecap="round" strokeLinejoin="round"
    />
    <g fill="#fff"><circle cx="10" cy="8" r="2.300" /><circle cx="18" cy="8" r="2.300" /><circle cx="26" cy="8" r="2.300" /></g>
    <g fill="#fff" stroke="#fff" fontFamily='"Noto Sans CJK JP", sans-serif' fontWeight="900">
      <text transform="translate(35.500 29) skewX(-10)" fontSize="21.500" strokeWidth=".5" textLength="84" lengthAdjust="spacingAndGlyphs">株式会社</text>
      <text transform="translate(121 28.600) skewX(-5)" fontSize="33.500" strokeWidth="1.600" textLength="243" lengthAdjust="spacingAndGlyphs">ムロオシステムズ</text>
    </g>
    <path d="M356 0h9v8h-6z" fill="#dfe8f5" />
  </Logo>
);

export default function App() {
  return (
    <Page>
      <GlobalStyle />
      <Header>
        <BrandLogo />
        <Nav>{navItems.map((n) => <a key={n} href="#">{n}</a>)}</Nav>
      </Header>
      <Breadcrumb>
        <HomeIcon />
        <Chevron viewBox="0 0 11 7"><path d="M.5.500l5 5.500 5-5.500" fill="none" stroke="#7b7b7b" /></Chevron>
        <CrumbSlot><CrumbText>会社概要</CrumbText></CrumbSlot>
      </Breadcrumb>
      <Main>
        <Watermark>Company</Watermark>
        <Title>COMPANY</Title>
        <Subtitle>会社概要</Subtitle>
        {rows.map((r, i) => (
          <Row key={i} $h={r.h}>
            <Term $tight={r.tight}>{r.term}</Term>
            <Detail $shift={r.shift}>{r.body}</Detail>
          </Row>
        ))}
      </Main>
      <Footer>
        <FooterTitle>株式会社 ムロオシステムズ</FooterTitle>
        <Columns>
          <Column>
            <Heading>カテゴリー一覧</Heading>
            <List>{categories.map((c, i) => <Item key={c} $gap={i ? 1.24 : 0} $in={3}>{c}</Item>)}</List>
          </Column>
          <Column $pad={2.4} $line="1px solid #fff">
            <Heading>ページ一覧</Heading>
            <List>
              {pages.map(([t, gap, indent, sub]) => <Item key={t} $gap={gap} $in={indent} $sub={sub}>{t}</Item>)}
            </List>
          </Column>
          <Column $pad={2.5} $line="2px solid #aaa">
            <Heading>最近の投稿</Heading>
            <Posts>
              {posts.map(([h, date, title]) => (
                <Post key={date} $h={h}>{date}<PostTitle>{title}</PostTitle></Post>
              ))}
            </Posts>
          </Column>
        </Columns>
      </Footer>
      <Copyright>© 2020 Muroosystems Corporation.</Copyright>
    </Page>
  );
}
